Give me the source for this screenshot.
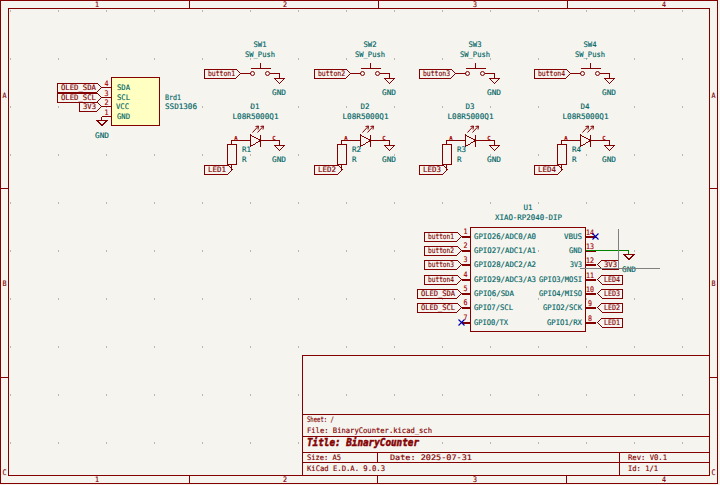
const RED = "#840000";
const TEAL = "#006464";
const NUM = "#a90000";
const FONT = "'DejaVu Sans Mono', monospace";

type TP = { x: number; y: number; s: string; w?: number; a?: "start" | "middle" | "end"; c?: string; f?: number; bold?: boolean; italic?: boolean; sw?: number };

function T({ x, y, s, w, a = "start", c = TEAL, f = 7.6, bold, italic, sw = 0.15 }: TP) {
  return (
    <text
      x={x - 0.5}
      y={y + 2.6}
      textAnchor={a}
      fill={c}
      stroke={c}
      strokeWidth={sw}
      fontSize={f}
      fontFamily={FONT}
      fontWeight={bold ? 700 : 400}
      fontStyle={italic ? "italic" : "normal"}
      textLength={w}
      lengthAdjust={w ? "spacingAndGlyphs" : undefined}
    >
      {s}
    </text>
  );
}

function L({ d, c = RED, w = 1 }: { d: string; c?: string; w?: number }) {
  return <path d={d} fill="none" stroke={c} strokeWidth={w} shapeRendering="crispEdges" />;
}

function X({ x, y }: { x: number; y: number }) {
  return <path d={`M${x - 3} ${y - 3}L${x + 3} ${y + 3}M${x + 3} ${y - 3}L${x - 3} ${y + 3}`} fill="none" stroke="#0000b0" strokeWidth={1.1} />;
}

function Gnd({ x, y, tx, ty }: { x: number; y: number; tx?: number; ty: number }) {
  return (
    <>
      <L d={`M${x - 5} ${y}H${x + 5}L${x} ${y + 5}Z`} />
      <T x={tx ?? x} y={ty} s="GND" a="middle" w={14} />
    </>
  );
}

function LabelR({ x0, tip, y, s, h = 4.5, w }: { x0: number; tip: number; y: number; s: string; h?: number; w: number }) {
  return (
    <>
      <L d={`M${x0} ${y - h}H${tip - h}L${tip} ${y}L${tip - h} ${y + h}H${x0}Z`} />
      <T x={x0 + 4} y={y} s={s} c={RED} w={w} />
    </>
  );
}

function LabelL({ x1, tip, y, s, h = 4.5, w }: { x1: number; tip: number; y: number; s: string; h?: number; w: number }) {
  return (
    <>
      <L d={`M${x1} ${y - h}H${tip + h}L${tip} ${y}L${tip + h} ${y + h}H${x1}Z`} />
      <T x={tip + 7} y={y} s={s} c={RED} w={w} />
    </>
  );
}

function Block({ dx, n, val }: { dx: number; n: number; val: string }) {
  return (
    <g transform={`translate(${dx} 0)`}>
      <T x={260} y={44} s={`SW${n}`} a="middle" w={13} />
      <T x={260} y={54} s="SW_Push" a="middle" w={30} />
      <LabelR x0={204} tip={240} y={73} s={`button${n}`} w={27} />
      <L d="M240 73H250" />
      <circle cx={252} cy={73} r={2} fill="none" stroke={RED} strokeWidth={1} />
      <circle cx={267} cy={73} r={2} fill="none" stroke={RED} strokeWidth={1} />
      <L d="M250 68H270M260 62V68" />
      <L d="M269 73H279V78" />
      <Gnd x={279} y={78} ty={92} />
      <T x={255} y={106} s={`D${n}`} a="middle" w={9} />
      <T x={255.5} y={116} s={val} a="middle" w={46} />
      <T x={236} y={137} s="A" a="middle" c={NUM} f={5.5} bold />
      <T x={274} y={137} s="C" a="middle" c={NUM} f={5.5} bold />
      <rect x={227} y={144} width={9} height={20} fill="none" stroke={RED} strokeWidth={1} shapeRendering="crispEdges" />
      <L d="M231 144V140H250M260 140H279V145M231 164V169" />
      <L d="M250 134.5V146L260 140Z" />
      <L d="M260 134V146" />
      <path d="M252 132L258 125.5M255 126L258 125.5L257.5 129M257 132L263 125.5M260 126L263 125.5L262.5 129" fill="none" stroke={RED} strokeWidth={1} />
      <T x={242} y={149} s={`R${n}`} w={9} />
      <T x={242} y={159} s="R" w={4.5} />
      <Gnd x={279} y={145} ty={159} />
      <LabelR x0={204} tip={232} y={169} s={`LED${n}`} w={18} />
    </g>
  );
}

const leftPins: [number, string, string | null, number, number][] = [
  [236, "GPIO26/ADC0/A0", "button1", 424, 62],
  [250, "GPIO27/ADC1/A1", "button2", 424, 62],
  [264, "GPIO28/ADC2/A2", "button3", 424, 62],
  [279, "GPIO29/ADC3/A3", "button4", 424, 62],
  [293, "GPIO6/SDA", "OLED_SDA", 417, 40],
  [307, "GPIO7/SCL", "OLED_SCL", 417, 39],
  [322, "GPIO0/TX", null, 0, 34],
];

const rightPins: [number, string, number, number][] = [
  [236, "VBUS", 18, 14],
  [250, "GND", 13, 13],
  [264, "3V3", 12, 12],
  [279, "GPIO3/MOSI", 43, 11],
  [293, "GPIO4/MISO", 43, 10],
  [307, "GPIO2/SCK", 39, 9],
  [322, "GPIO1/RX", 35, 8],
];

const grid = Array.from({ length: 15 }, (_, i) => 10 + i * 48);
const gridY = Array.from({ length: 10 }, (_, i) => 10 + i * 48);

export default function App() {
  return (
    <div className="w-[720px] h-[485px] bg-[#f5f4ef] overflow-hidden">
      <svg width={720} height={485} viewBox="0 0 720 485" className="block">
        {grid.flatMap((x) =>
          gridY.map((y) => <rect key={`${x}-${y}`} x={x} y={y} width={1} height={2} fill="#b9b8b2" />)
        )}
        <g transform="translate(0.5 0.5)">
          {/* sheet frame */}
          <rect x={0} y={0} width={717} height={483} fill="none" stroke={RED} shapeRendering="crispEdges" />
          <rect x={8} y={8} width={701} height={467} fill="none" stroke={RED} shapeRendering="crispEdges" />
          <L d="M189 0V8M378 0V8M567 0V8M189 475V483M377 475V483M566 475V483M0 188H8M0 377H8M709 188H717M709 377H717" />
          {[["1", 97], ["2", 285], ["3", 475], ["4", 664]].map(([s, x]) => (
            <g key={s as string}>
              <T x={x as number} y={3.5} s={s as string} a="middle" c={RED} w={4} />
              <T x={x as number} y={478.5} s={s as string} a="middle" c={RED} w={4} />
            </g>
          ))}
          {[["A", 95], ["B", 283], ["C", 472]].map(([s, y]) => (
            <g key={s as string}>
              <T x={4.5} y={y as number} s={s as string} a="middle" c={RED} w={4} />
              <T x={713.5} y={y as number} s={s as string} a="middle" c={RED} w={4} />
            </g>
          ))}

          {/* title block */}
          <L d="M302 475V355H709M302 414H709M302 436H709M302 452H709M302 462H709M377 452V462M619 452V475" />
          <T x={307} y={419} s="Sheet: /" c={RED} w={27} />
          <T x={307} y={430} s="File: BinaryCounter.kicad_sch" c={RED} w={125} />
          <T x={307} y={443} s="Title: BinaryCounter" c={RED} w={112} f={10} bold italic sw={0.5} />
          <T x={307} y={457} s="Size: A5" c={RED} w={34} />
          <T x={390} y={457} s="Date: 2025-07-31" c={RED} w={82} />
          <T x={628} y={457} s="Rev: V0.1" c={RED} w={39} />
          <T x={307} y={468} s="KiCad E.D.A. 9.0.3" c={RED} w={78} />
          <T x={628} y={468} s="Id: 1/1" c={RED} w={30} />

          {/* OLED board */}
          <rect x={111} y={77} width={48} height={48} fill="#ffffc2" stroke={RED} shapeRendering="crispEdges" />
          <L d="M101 87H111M101 97H111M101 106H111M101 116H111M101 116V120" />
          {[["4", 83, "SDA", 87, 117], ["3", 92.5, "SCL", 97, 117], ["2", 102, "VCC", 106, 116], ["1", 112, "GND", 116, 117]].map(([n, ny, s, y, x]) => (
            <g key={n as string}>
              <T x={106.5} y={ny as number} s={n as string} a="middle" c={NUM} w={4} />
              <T x={x as number} y={y as number} s={s as string} w={13} />
            </g>
          ))}
          <LabelR x0={57} tip={101} y={87} s="OLED_SDA" w={35} />
          <LabelR x0={57} tip={101} y={97} s="OLED_SCL" w={35} />
          <LabelR x0={79} tip={101} y={106} s="3V3" w={13} />
          <Gnd x={101.5} y={120} ty={135} tx={102} />
          <T x={165} y={97} s="Brd1" w={16} />
          <T x={165} y={106} s="SSD1306" w={32} />

          {/* switches and LEDs */}
          <Block dx={0} n={1} val="L08R5000Q1" />
          <Block dx={110} n={2} val="L08R5000Q1" />
          <Block dx={215} n={3} val="L08R5000Q1" />
          <Block dx={330} n={4} val="L08R5000Q1" />

          {/* MCU */}
          <T x={528} y={207} s="U1" a="middle" w={9} />
          <T x={528.5} y={217} s="XIAO-RP2040-DIP" a="middle" w={67} />
          <rect x={470} y={227} width={115} height={104} fill="none" stroke={RED} shapeRendering="crispEdges" />
          {leftPins.map(([y, name, lab, x0, w], i) => (
            <g key={name}>
              <L d={`M461 ${y}H470`} w={2} />
              <T x={465.5} y={y - 5} s={String(i + 1)} a="middle" c={NUM} w={4} />
              <T x={474} y={y} s={name} w={w} />
              {lab && <LabelR x0={x0} tip={461} y={y} s={lab} w={lab.length > 7 ? 34 : 26} />}
            </g>
          ))}
          <X x={461} y={322} />
          {rightPins.map(([y, name, w, n]) => (
            <g key={name}>
              <L d={`M585 ${y}H595`} w={2} />
              <T x={590} y={y - 4.5} s={String(n)} a="middle" c={NUM} w={n > 9 ? 8 : 4} />
              <T x={582} y={y} s={name} a="end" w={w} />
            </g>
          ))}
          <X x={595} y={236} />
          <L d="M585 250H628V254" c="#008400" />
          <Gnd x={628.5} y={254} ty={269} tx={629} />
          <LabelL x1={618} tip={597} y={264} s="3V3" w={13} />
          <LabelL x1={622} tip={597} y={279} s="LED4" w={16} />
          <LabelL x1={622} tip={597} y={293} s="LED3" w={16} />
          <LabelL x1={622} tip={597} y={307} s="LED2" w={16} />
          <LabelL x1={622} tip={597} y={322} s="LED1" w={16} />
          {/* crosshair cursor */}
          <L d="M618 228V268M579 268H659" c="#808080" />
        </g>
      </svg>
    </div>
  );
}
